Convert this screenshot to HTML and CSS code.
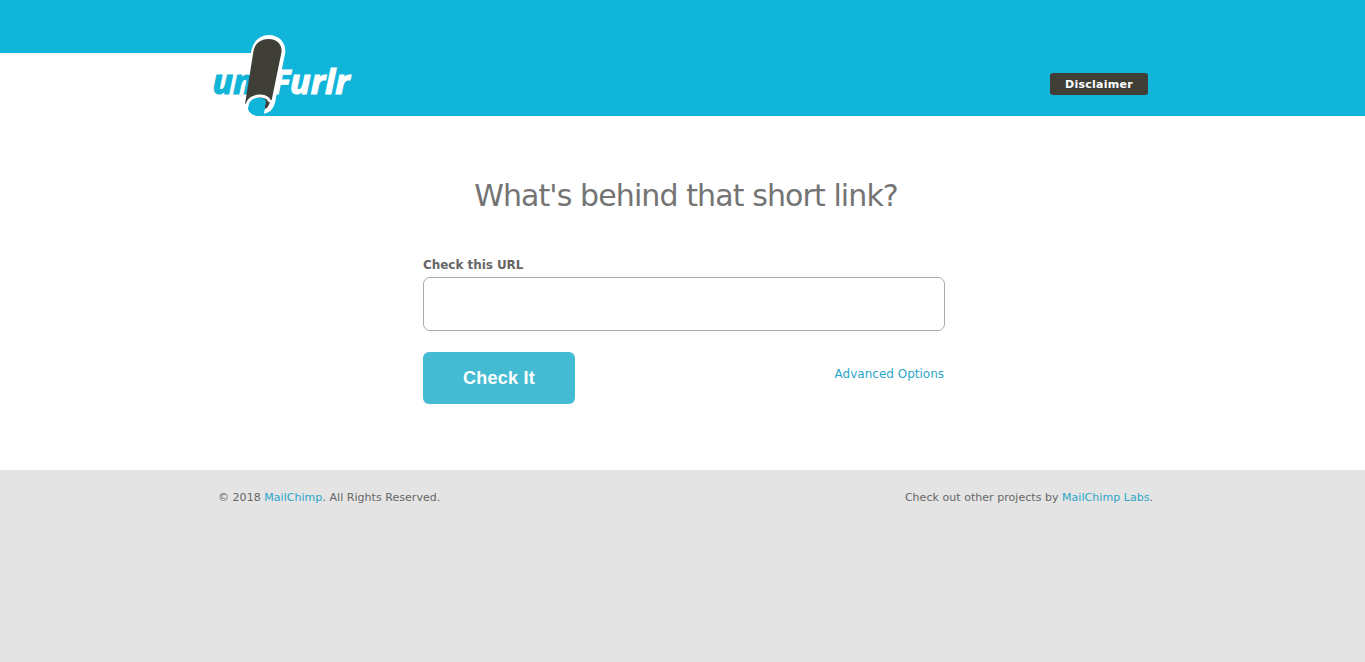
FILE: index.html
```html
<!DOCTYPE html>
<html lang="en">
<head>
    <meta charset="UTF-8">
    <title>unFurlr</title>
    <link rel="stylesheet" href="styles.css">
</head>
<body>
    <header class="header">
        <div class="header-inner">
            <a href="#" class="logo">
                <svg width="165" height="91" viewBox="0 0 165 91" role="img" aria-label="unFurlr">
                    <path fill="#fff" d="M0 28H60V91H0z"/>
                    <path fill="#10b5d9" d="M61 91C53 91 48 88 48 82C48 75 54 71 61 71H78V91z"/>
                    <text class="logo-un" x="12.500" y="69" textLength="41" lengthAdjust="spacingAndGlyphs">un</text>
                    <text class="logo-furlr" x="72" y="69" textLength="77.500" lengthAdjust="spacingAndGlyphs">Furlr</text>
                    <path fill="#fff" d="M56 60V28H51V27C53 16 60 10 69 10C79 10 87 18 85 29L75.500 75C74 83 70 87.500 64 88.500L65 83L62 75z"/>
                    <path fill="#3f3f38" d="M45 79L53.500 26C55 18 61 14 69 14C76 14 82.500 19 81.500 27L71.500 76C70 81 68 83 65 84L64.500 75L56 72z"/>
                    <path fill="#10b5d9" d="M61 91C53 91 48.500 88 48.500 82C49 76 54 73 60 73C65 73 67 76 66 78C64 83 65 84 64 91z"/>
                    <path fill="none" stroke="#fff" stroke-width="3" d="M47 82C47 74 54 71 60 71C66 71 70 74 69 77"/>
                    <path fill="#3f3f38" d="M66 76C68 76 70 78 70 78C69 82 67 84 65 84C65.500 81 66 80 66 76z"/>
                    <path fill="#fff" d="M70.500 75L75.500 75C74 84 70 87.500 64 88.500L65 84C68 83 69 80 70.500 75z"/>
                </svg>
            </a>
            <a href="#" class="disclaimer">Disclaimer</a>
        </div>
    </header>

    <main class="content">
        <h1>What's behind that short link?</h1>
        <form class="url-form">
            <label for="url">Check this URL</label>
            <input type="text" id="url" name="url">
            <div class="form-actions">
                <button type="submit">Check It</button>
                <a href="#" class="advanced">Advanced Options</a>
            </div>
        </form>
    </main>

    <footer class="footer">
        <p class="copyright">© 2018 <a href="#">MailChimp</a>. All Rights Reserved.</p>
        <p class="projects">Check out other projects by <a href="#">MailChimp Labs</a>.</p>
    </footer>
</body>
</html>
```
FILE: styles.css
```css
* {
    box-sizing: border-box;
}
body {
    margin: 0;
    min-height: 100vh;
    display: flex;
    flex-direction: column;
    background: #e4e4e4;
    font-family: Verdana, "DejaVu Sans", sans-serif;
    color: #666;
}
a {
    color: #2ba6c9;
    text-decoration: none;
}
.header {
    height: 116px;
    background: linear-gradient(#fff, #fff) no-repeat 0 53px / calc(50% - 430px) 63px #10b5d9;
}
.header-inner {
    width: 965px;
    height: 116px;
    margin: 0 auto;
    display: flex;
    justify-content: space-between;
    align-items: flex-end;
    padding-right: 17px;
}
.logo {
    height: 91px;
}
.logo svg {
    display: block;
}
.logo text {
    font-family: "Open Sans", sans-serif;
    font-size: 34px;
    font-weight: 700;
    font-style: italic;
    stroke-width: 1.2px;
}
.logo-un {
    fill: #10b5d9;
    stroke: #10b5d9;
}
.logo-furlr {
    fill: #fff;
    stroke: #fff;
}
.disclaimer {
    width: 98px;
    height: 22px;
    margin-bottom: 21px;
    background: #3f3f38;
    border-radius: 3px;
    color: #fff;
    font-size: 11px;
    font-weight: bold;
    line-height: 23px;
    letter-spacing: 0.25px;
    text-align: center;
}
.content {
    height: 354px;
    padding-top: 60px;
    background: #fff;
}
h1 {
    margin: 0;
    padding-left: 7px;
    font-size: 30px;
    font-weight: normal;
    line-height: 40px;
    letter-spacing: -0.9px;
    text-align: center;
    color: #747474;
}
.url-form {
    width: 525px;
    margin: 39px auto 0;
    padding-left: 3px;
}
label {
    display: block;
    height: 22px;
    font-size: 12px;
    font-weight: bold;
    line-height: 20px;
    letter-spacing: -0.05px;
}
input {
    display: block;
    width: 100%;
    height: 54px;
    padding: 0 14px;
    border: 1px solid #aaa;
    border-radius: 7px;
    background: #fff;
    font-size: 18px;
}
.form-actions {
    display: flex;
    justify-content: space-between;
    margin-top: 21px;
}
button {
    width: 152px;
    height: 52px;
    padding: 0;
    border: none;
    border-radius: 6px;
    background: #45bbd3;
    color: #fff;
    font-family: "Liberation Sans", Arial, sans-serif;
    font-size: 18px;
    font-weight: bold;
    letter-spacing: 0.25px;
}
.advanced {
    margin-right: 1px;
    font-size: 12px;
    line-height: 44px;
}
.footer {
    width: 941px;
    margin: 0 auto;
    padding: 19px 0 0 6px;
    display: flex;
    justify-content: space-between;
    font-size: 11px;
    line-height: 17px;
    letter-spacing: 0.04px;
}
.footer p {
    margin: 0;
}
```
